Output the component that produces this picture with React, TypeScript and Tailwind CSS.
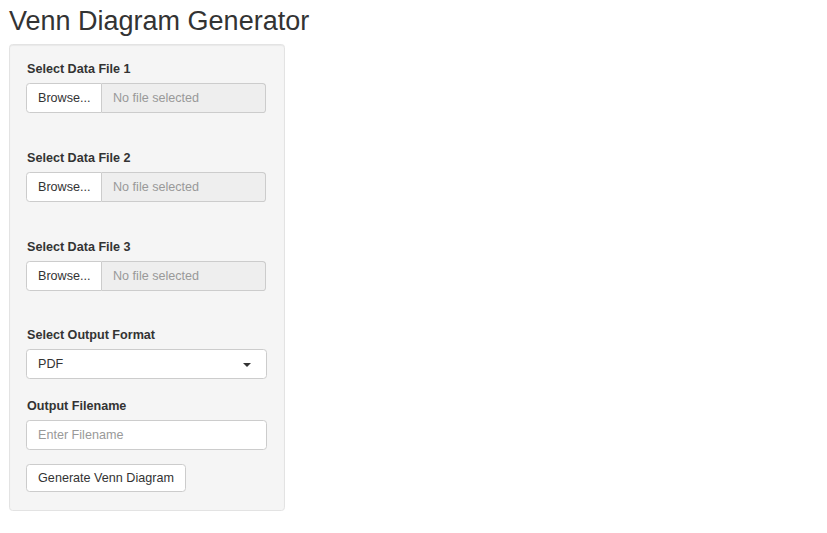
import React from "react";

function FileInput({ label }: { label: string }) {
  return (
    <div className="mb-[36px]">
      <div className="h-[18px] mb-[5px] text-[12.6px] leading-[18px] font-bold pl-[1px]">{label}</div>
      <div className="flex h-[30px] w-[240px]">
        <div className="w-[76px] h-full flex items-center pl-[11px] bg-white border border-[#ccc] rounded-l-[3.6px] text-[12.6px] text-[#333]">
          Browse...
        </div>
        <div className="flex-1 h-full flex items-center pl-[11px] bg-[#eeeeee] border border-l-0 border-[#ccc] rounded-r-[3.6px] text-[12.6px] text-[#999]">
          No file selected
        </div>
      </div>
    </div>
  );
}

export default function App() {
  return (
    <div className="px-[9px] font-['Liberation_Sans',Arial,sans-serif] text-[#333]">
      <h2 className="pt-[6px] mb-[8px] text-[27px] leading-[30px] font-normal text-[#333]">Venn Diagram Generator</h2>
      <div className="w-[276px] bg-[#f5f5f5] border border-[#e3e3e3] rounded-[3.6px] pt-[15px] pb-[18px] pl-[16px] pr-[17px] shadow-[inset_0_1px_1px_rgba(0,0,0,0.05)]">
        <FileInput label="Select Data File 1" />
        <FileInput label="Select Data File 2" />
        <FileInput label="Select Data File 3" />
        <div className="h-[18px] mb-[5px] -mt-[1px] text-[12.6px] leading-[18px] font-bold pl-[1px]">Select Output Format</div>
        <div className="h-[30px] w-[241px] flex items-center justify-between pl-[11px] pr-[15px] bg-white border border-[#ccc] rounded-[3.6px] text-[12.6px]">
          <span>PDF</span>
          <span className="w-0 h-0 border-l-[4.5px] border-r-[4.5px] border-t-[4.5px] border-l-transparent border-r-transparent border-t-[#333] mt-[1px]" />
        </div>
        <div className="h-[18px] mt-[18px] mb-[5px] text-[12.6px] leading-[18px] font-bold pl-[1px]">Output Filename</div>
        <div className="h-[30px] w-[241px] flex items-center pl-[11px] bg-white border border-[#ccc] rounded-[3.6px] text-[12.6px] text-[#999]">
          Enter Filename
        </div>
        <div className="mt-[14px] h-[28px] w-[160px] flex items-center justify-center bg-white border border-[#ccc] rounded-[3.6px] text-[12.6px] text-[#333]">
          Generate Venn Diagram
        </div>
      </div>
    </div>
  );
}
